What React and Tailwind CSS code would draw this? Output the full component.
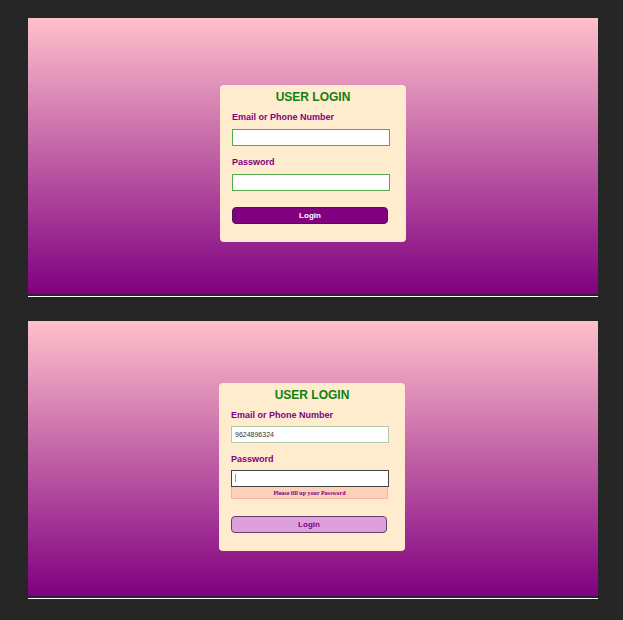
import React from "react";

const sans = "font-['Liberation_Sans',Arial,sans-serif]";
const serif = "font-['Liberation_Serif','Times_New_Roman',serif]";

function Field({ id, label, type, value, gap, border, error, caret }) {
  return (
    <div className={`flex flex-col ${gap}`}>
      <label htmlFor={id} className="text-[9px] leading-3 font-bold text-[#800080]">
        {label}
      </label>
      <div>
        <div className="relative">
          <input
            id={id}
            type={type}
            defaultValue={value}
            className={`block h-[17px] w-full border bg-white px-[3px] text-[7px] text-[#333] outline-none ${border}`}
          />
          {caret && <span className="absolute top-1 left-1 h-2 w-px bg-[#999]" />}
        </div>
        {error && (
          <p className={`mr-px h-3 border border-t-0 border-[#f5b5a5] bg-[#ffd0b8] text-center text-[6px] leading-3 font-bold text-[#800080] ${serif}`}>
            {error}
          </p>
        )}
      </div>
    </div>
  );
}

function Screen({ size, children }) {
  return (
    <section className="border-b border-white">
      <div className={`flex justify-center border-b-2 border-[#331c38] bg-linear-to-b/srgb from-[#ffc0cb] to-[#800080] ${size}`}>
        {children}
      </div>
    </section>
  );
}

function LoginCard({ prefix, email, gap, emailBorder, passwordBorder, error, caret, buttonStyle }) {
  return (
    <form
      onSubmit={(e) => e.preventDefault()}
      className="w-[186px] self-start rounded-[4px] bg-[#ffebcd] pt-[5px] pb-[18px]"
    >
      <h1 className="text-center text-[12px] leading-[14px] font-bold text-[#118011]">USER LOGIN</h1>
      <div className="pr-4 pl-3">
        <div className="mt-[7px] flex flex-col gap-[10px]">
          <Field id={`${prefix}-email`} label="Email or Phone Number" type="text" value={email} gap={gap} border={emailBorder} />
          <Field id={`${prefix}-password`} label="Password" type="password" gap={gap} border={passwordBorder} error={error} caret={caret} />
        </div>
        <div className="pr-0.5">
          <button
            type="submit"
            className={`block h-[17px] w-full rounded-[4px] border text-[8px] leading-none font-bold ${buttonStyle}`}
          >
            Login
          </button>
        </div>
      </div>
    </form>
  );
}

export default function App() {
  return (
    <main className={`flex min-h-screen flex-col gap-6 bg-[#262626] pt-[18px] pr-[25px] pb-5 pl-7 ${sans}`}>
      <Screen size="h-[278px] pt-[67px]">
        <LoginCard
          prefix="empty"
          gap="gap-1.5"
          emailBorder="border-[#55aa4c]"
          passwordBorder="border-[#55aa4c]"
          buttonStyle="mt-4 border-[#4a1550] bg-[#800080] text-white"
        />
      </Screen>
      <Screen size="h-[277px] pt-[62px] pr-0.5">
        <LoginCard
          prefix="filled"
          email="9624896324"
          gap="gap-[5px]"
          emailBorder="border-[#b5cba5]"
          passwordBorder="border-[#444]"
          error="Please fill up your Password"
          caret
          buttonStyle="mt-[17px] border-[#65406b] bg-[#dda0dd] text-[#800080]"
        />
      </Screen>
    </main>
  );
}
